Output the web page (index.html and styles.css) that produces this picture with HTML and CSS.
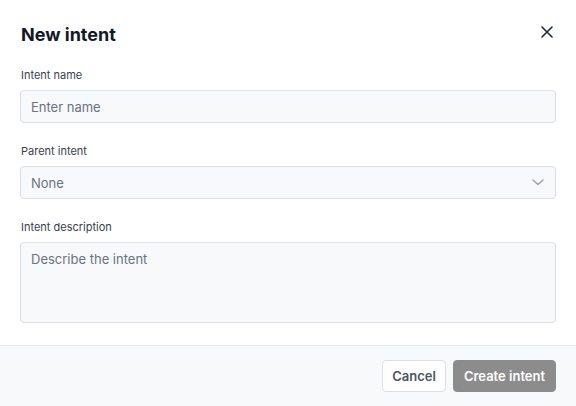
FILE: index.html
```html
<!DOCTYPE html>
<html>
<head>
<meta charset="utf-8">
<link rel="stylesheet" href="styles.css">
</head>
<body>
<div class="modal">
  <div class="header">
    <h1 class="title">New intent</h1>
    <button class="close" aria-label="Close">
      <svg width="12" height="12" viewBox="0 0 12 12"><path d="M1 1 L11 11 M11 1 L1 11" stroke="#1f2937" stroke-width="1.6" stroke-linecap="round" fill="none"/></svg>
    </button>
  </div>
  <div class="body">
    <div class="field">
      <label class="label">Intent name</label>
      <div class="input"><span class="placeholder">Enter name</span></div>
    </div>
    <div class="field">
      <label class="label">Parent intent</label>
      <div class="input select"><span class="placeholder">None</span>
        <svg class="chev" width="12" height="7" viewBox="0 0 12 7"><path d="M1 1 L6 5.5 L11 1" stroke="#9ca3af" stroke-width="1.5" stroke-linecap="round" stroke-linejoin="round" fill="none"/></svg>
      </div>
    </div>
    <div class="field">
      <label class="label">Intent description</label>
      <div class="input textarea"><span class="placeholder">Describe the intent</span></div>
    </div>
  </div>
  <div class="footer">
    <button class="btn cancel">Cancel</button>
    <button class="btn primary">Create intent</button>
  </div>
</div>
</body>
</html>
```
FILE: styles.css
```css
html, body {
  margin: 0;
  padding: 0;
  background: #ffffff;
  font-family: Inter, "Noto Sans", sans-serif;
}
.modal {
  width: 576px;
  height: 406px;
  display: flex;
  flex-direction: column;
  overflow: hidden;
}
.header {
  display: flex;
  align-items: flex-start;
  justify-content: space-between;
  padding: 23px 20px 0 21px;
}
.title {
  margin: 0;
  font-size: 18px;
  line-height: 22px;
  font-weight: 700;
  color: #111827;
  padding-top: 1px;
}
.close {
  border: 0;
  background: none;
  padding: 0;
  margin: 2px 2px 0 0;
  width: 14px;
  height: 14px;
  display: flex;
  align-items: center;
  justify-content: center;
  cursor: pointer;
}
.body {
  padding: 22px 20px 0 20px;
  display: flex;
  flex-direction: column;
  gap: 21px;
}
.field {
  display: flex;
  flex-direction: column;
}
.label {
  font-size: 11px;
  line-height: 15px;
  color: #374151;
  margin: 0 0 7px 1px;
}
.input {
  box-sizing: border-box;
  height: 33px;
  border: 1px solid #dcdfe4;
  border-radius: 4px;
  background: #f8f9fb;
  display: flex;
  align-items: center;
  padding: 0 10px;
}
.placeholder {
  font-size: 13px;
  color: #6b7280;
}
.select {
  justify-content: space-between;
  padding-right: 11px;
}
.textarea {
  height: 81px;
  align-items: flex-start;
  padding-top: 8px;
}
.footer {
  margin-top: 22px;
  flex: 1;
  border-top: 1px solid #e5e7eb;
  background: #f8f9fb;
  display: flex;
  justify-content: flex-end;
  align-items: flex-start;
  gap: 7px;
  padding: 14px 20px 0 20px;
}
.btn {
  box-sizing: border-box;
  height: 32px;
  border-radius: 4px;
  font-family: Inter, "Noto Sans", sans-serif;
  font-size: 13px;
  font-weight: 600;
  padding: 0;
  cursor: pointer;
}
.cancel {
  width: 64px;
  background: #ffffff;
  border: 1px solid #dcdfe4;
  color: #4b5563;
}
.primary {
  width: 103px;
  background: #8c8c8c;
  border: 1px solid #8c8c8c;
  color: #ffffff;
}
```
